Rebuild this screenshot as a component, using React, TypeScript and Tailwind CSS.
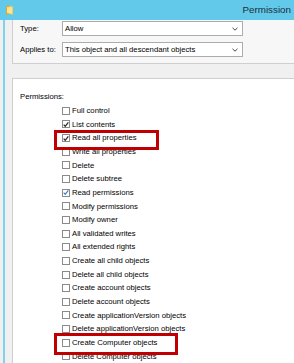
import * as React from "react";

const perms: { label: string; checked?: "dark" | "blue" }[] = [
    { label: "Full control" },
    { label: "List contents", checked: "dark" },
    { label: "Read all properties", checked: "dark" },
    { label: "Write all properties" },
    { label: "Delete" },
    { label: "Delete subtree" },
    { label: "Read permissions", checked: "blue" },
    { label: "Modify permissions" },
    { label: "Modify owner" },
    { label: "All validated writes" },
    { label: "All extended rights" },
    { label: "Create all child objects" },
    { label: "Delete all child objects" },
    { label: "Create account objects" },
    { label: "Delete account objects" },
    { label: "Create applicationVersion objects" },
    { label: "Delete applicationVersion objects" },
    { label: "Create Computer objects" },
    { label: "Delete Computer objects" },
];

function Chevron() {
    return (
        <svg width="6" height="4" viewBox="0 0 6 4" className="shrink-0">
            <path d="M0.5 0.8 L3 3.2 L5.5 0.8" fill="none" stroke="#4a4a4a" strokeWidth="1" />
        </svg>
    );
}

function Select({ value }: { value: string }) {
    return (
        <div className="flex h-[15px] w-[181px] items-center justify-between border border-[#acacac] bg-white pl-[2px] pr-[4px]">
            <span className="whitespace-nowrap">{value}</span>
            <Chevron />
        </div>
    );
}

function Checkbox({ checked }: { checked?: "dark" | "blue" }) {
    return (
        <div className="flex h-[8px] w-[8px] shrink-0 items-center justify-center border border-[#8a8a8a] bg-white">
            {checked && (
                <svg width="7" height="7" viewBox="0 0 7 7">
                    <path
                        d="M0.8 3.6 L2.6 5.6 L6.2 1"
                        fill="none"
                        stroke={checked === "blue" ? "#3b7fc0" : "#222"}
                        strokeWidth="1.4"
                    />
                </svg>
            )}
        </div>
    );
}

export default function App() {
    return (
        <div
            className="relative h-[363px] w-[294px] overflow-hidden bg-[#f0f0f0] text-[7.7px] text-black"
            style={{ fontFamily: '"Liberation Sans", Arial, sans-serif' }}
        >
            <div className="flex h-[20px] items-center justify-between bg-[#62c9ea] pl-[6px] pr-[3px]">
                <svg width="7" height="10" viewBox="0 0 7 10">
                    <path d="M0 1 L3 0 L3 9 L0 10 Z" fill="#d9a935" />
                    <path d="M3 1 L7 1.5 L7 9.5 L3 9 Z" fill="#f3cf5c" />
                    <path d="M1 2 L6 2.5 L6 8.5 L1 8 Z" fill="#fbe39a" />
                </svg>
                <span className="whitespace-nowrap text-[9.8px] text-[#1d2f3b]">Permission</span>
            </div>

            <div className="ml-[3px] h-[343px] border-l-2 border-[#7dd3ee] pl-[7px]">
                <div className="h-[44px] border-b border-l border-[#cfcfcf] bg-[#f7f7f7] pl-[7px] pt-[1px]">
                    <div className="flex items-center">
                        <span className="w-[42px]">Type:</span>
                        <Select value="Allow" />
                    </div>
                    <div className="mt-[6px] flex items-center">
                        <span className="w-[42px] whitespace-nowrap">Applies to:</span>
                        <Select value="This object and all descendant objects" />
                    </div>
                </div>

                <div className="mt-[14px] h-[300px] border-l border-t border-[#cfcfcf] bg-white pl-[7px] pt-[11.4px]">
                    <div className="flex h-[13.65px] items-center">Permissions:</div>
                    {perms.map((p) => (
                        <div key={p.label} className="ml-[42px] flex h-[13.65px] items-center gap-[2px]">
                            <Checkbox checked={p.checked} />
                            <span className="whitespace-nowrap">{p.label}</span>
                        </div>
                    ))}
                </div>
            </div>

            <div className="absolute left-[54px] top-[130px] h-[20px] w-[105px] border-[3px] border-[#c00000]" />
            <div className="absolute left-[54px] top-[333px] h-[22px] w-[124px] border-[3px] border-[#c00000]" />
        </div>
    );
}
